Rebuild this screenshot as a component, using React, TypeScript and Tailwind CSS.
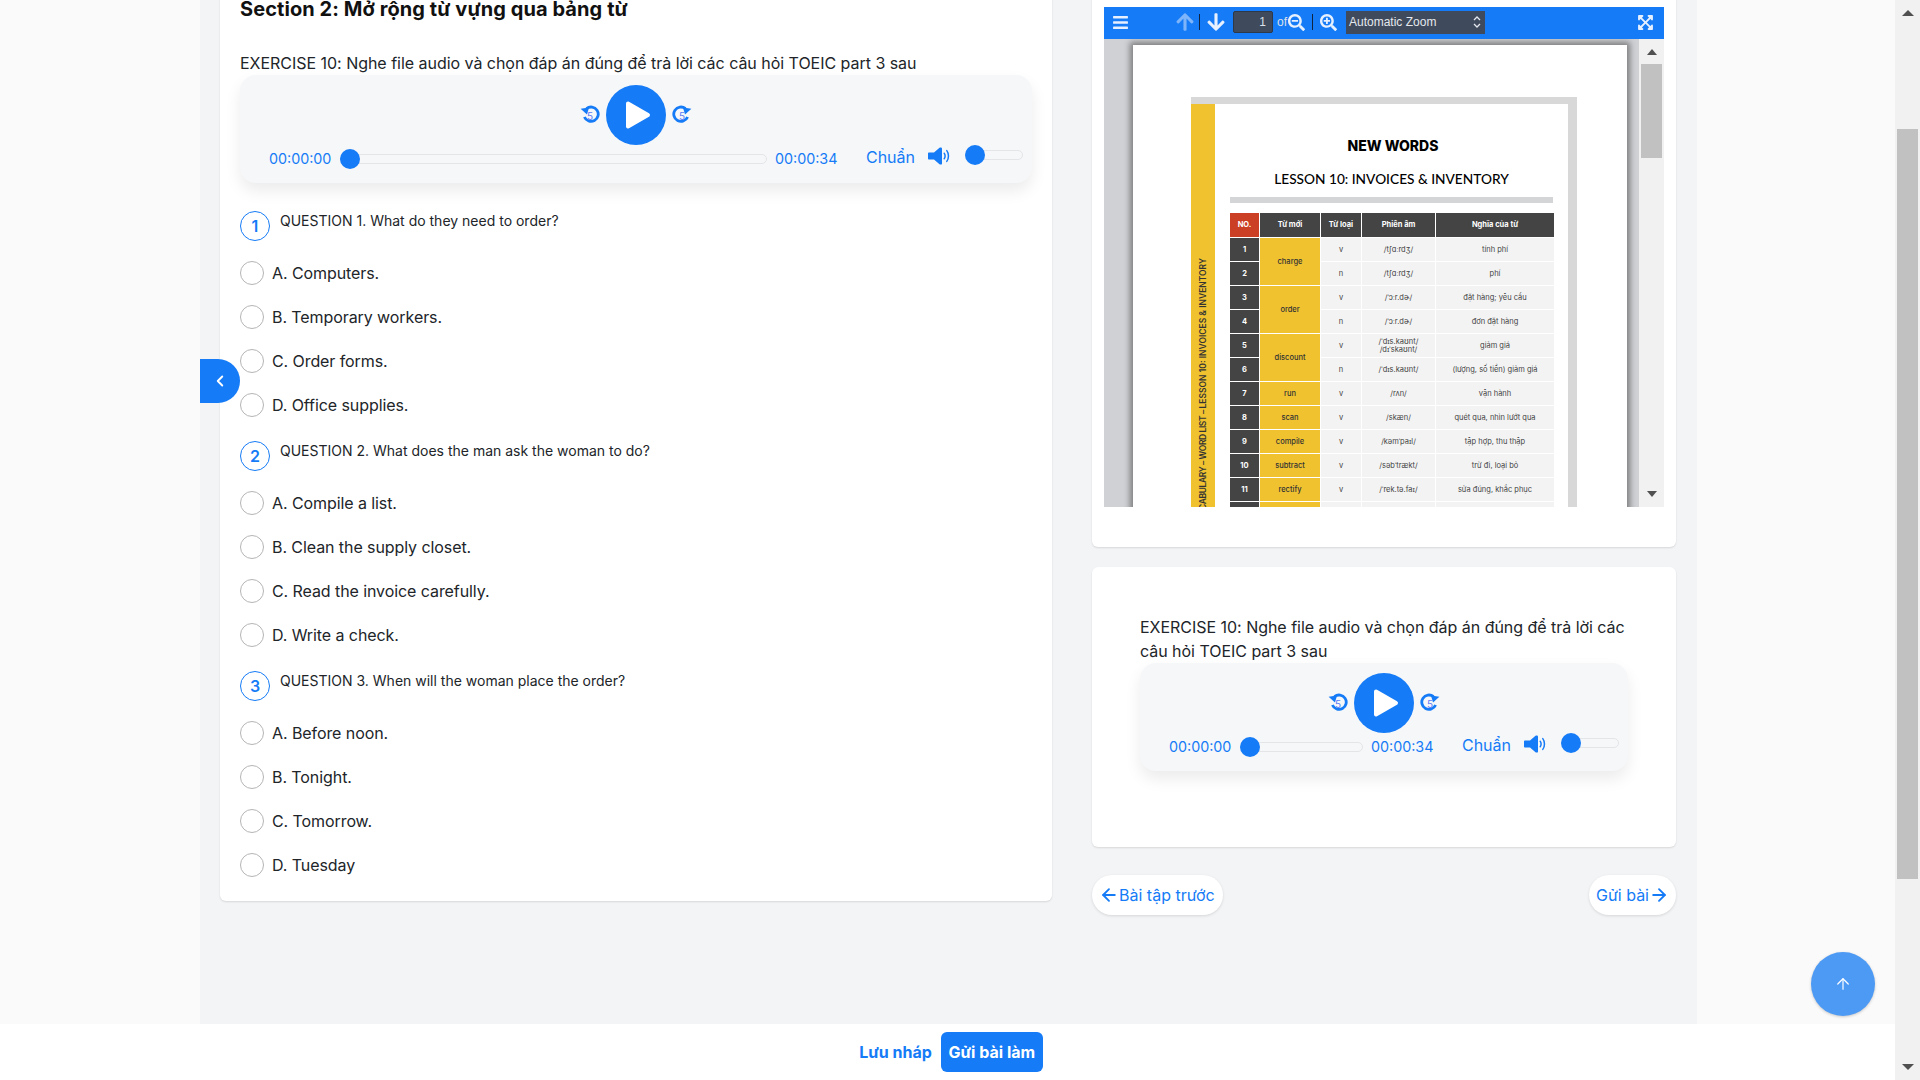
import { ArrowLeft, ArrowRight, ArrowUp, ChevronLeft } from 'lucide-react'
import {
  FaArrowDown,
  FaArrowUp,
  FaBars,
  FaExpandArrowsAlt,
  FaSearchMinus,
  FaSearchPlus,
} from 'react-icons/fa'

const questions = [
  {
    id: 1,
    text: 'QUESTION 1. What do they need to order?',
    options: ['A. Computers.', 'B. Temporary workers.', 'C. Order forms.', 'D. Office supplies.'],
  },
  {
    id: 2,
    text: 'QUESTION 2. What does the man ask the woman to do?',
    options: ['A. Compile a list.', 'B. Clean the supply closet.', 'C. Read the invoice carefully.', 'D. Write a check.'],
  },
  {
    id: 3,
    text: 'QUESTION 3. When will the woman place the order?',
    options: ['A. Before noon.', 'B. Tonight.', 'C. Tomorrow.', 'D. Tuesday'],
  },
]

const words = [
  { no: 1, word: 'charge', span: 2, type: 'v', ipa: '/tʃɑːrdʒ/', mean: 'tính phí' },
  { no: 2, type: 'n', ipa: '/tʃɑːrdʒ/', mean: 'phí' },
  { no: 3, word: 'order', span: 2, type: 'v', ipa: '/ˈɔːr.dɚ/', mean: 'đặt hàng; yêu cầu' },
  { no: 4, type: 'n', ipa: '/ˈɔːr.dɚ/', mean: 'đơn đặt hàng' },
  { no: 5, word: 'discount', span: 2, type: 'v', ipa: '/ˈdɪs.kaʊnt/', ipa2: '/dɪˈskaʊnt/', mean: 'giảm giá' },
  { no: 6, type: 'n', ipa: '/ˈdɪs.kaʊnt/', mean: '(lượng, số tiền) giảm giá' },
  { no: 7, word: 'run', span: 1, type: 'v', ipa: '/rʌn/', mean: 'vận hành' },
  { no: 8, word: 'scan', span: 1, type: 'v', ipa: '/skæn/', mean: 'quét qua, nhìn lướt qua' },
  { no: 9, word: 'compile', span: 1, type: 'v', ipa: '/kəmˈpaɪl/', mean: 'tập hợp, thu thập' },
  { no: 10, word: 'subtract', span: 1, type: 'v', ipa: '/səbˈtrækt/', mean: 'trừ đi, loại bỏ' },
  { no: 11, word: 'rectify', span: 1, type: 'v', ipa: '/ˈrek.tə.faɪ/', mean: 'sửa đúng, khắc phục' },
]

function SkipIcon({ flip }: { flip?: boolean }) {
  return (
    <div className="relative h-[20px] w-[20px] shrink-0">
      <svg viewBox="0 0 20 20" className={flip ? '-scale-x-100 h-[20px] w-[20px]' : 'h-[20px] w-[20px]'}>
        <path d="M6.5 3.6A7.2 7.2 0 1 1 4.4 12" fill="none" stroke="#157bf6" strokeWidth="2.8" />
        <path d="M0.6 3.8 9 2.4 7 9.4Z" fill="#157bf6" />
      </svg>
      <span className="absolute inset-0 mt-[2px] flex items-center justify-center text-[10px] text-[#5b7cf5]">5</span>
    </div>
  )
}

function Speaker() {
  return (
    <svg viewBox="0 0 22 18" className="ml-[14px] mb-[3px] h-[18px] w-[22px] shrink-0" fill="#157bf6">
      <path d="M0 6.5C0 5.8.5 5.5 1 5.5H6L11.5.8C12.5 0 14 .4 14 1.6V16.4C14 17.6 12.5 18 11.5 17.2L6 12.5H1C.5 12.5 0 12.2 0 11.5Z" />
      <path d="M16.2 6.2C17.4 7.6 17.4 10.4 16.2 11.8" fill="none" stroke="#157bf6" strokeWidth="1.5" strokeLinecap="round" />
      <path d="M18.8 3.6C21 6.4 21 11.6 18.8 14.4" fill="none" stroke="#157bf6" strokeWidth="1.5" strokeLinecap="round" />
    </svg>
  )
}

function Player() {
  return (
    <div className="rounded-2xl bg-[#f6f7f9] pt-[10px] pb-[10px] pl-[29px] pr-[9px] shadow-[0_8px_16px_rgba(0,0,0,0.08)]">
      <div className="ml-[-20px] flex items-center justify-center gap-[6px]">
        <SkipIcon />
        <div className="flex h-[60px] w-[60px] items-center justify-center rounded-full bg-[#157bf6]">
          <svg viewBox="0 0 26 30" className="ml-[3px] h-[30px] w-[26px]">
            <path d="M3 3.5 23 15 3 26.5Z" fill="#fff" stroke="#fff" strokeWidth="4" strokeLinejoin="round" />
          </svg>
        </div>
        <SkipIcon flip />
      </div>
      <div className="flex h-[28px] items-center text-[#157bf6]">
        <span className="-mt-[1px] w-[63px] shrink-0 text-[14.3px]">00:00:00</span>
        <div className="mx-[8px] flex h-[10px] flex-1 items-center rounded-full border border-[#e3e5e9]">
          <div className="-ml-[1px] h-[20px] w-[20px] rounded-full bg-[#157bf6]" />
        </div>
        <span className="-mt-[1px] w-[62px] shrink-0 text-[14.3px]">00:00:34</span>
        <div className="ml-[29px] flex h-[24px] shrink-0 items-center self-start">
          <span className="w-[48px] text-[16px] tracking-[-0.05px]">Chuẩn</span>
          <Speaker />
          <div className="ml-[15px] mb-[4px] flex h-[10px] w-[58px] items-center rounded-full border border-[#e3e5e9]">
            <div className="-ml-[1px] h-[20px] w-[20px] rounded-full bg-[#157bf6]" />
          </div>
        </div>
      </div>
    </div>
  )
}

function Question({ q }: { q: (typeof questions)[number] }) {
  return (
    <div className="mb-[24px]">
      <div className="flex h-[30px] gap-[10px]">
        <div className="flex h-[30px] w-[30px] items-center justify-center rounded-full border border-[#157bf6] text-[16px] font-semibold text-[#157bf6]">
          {q.id}
        </div>
        <span className="text-[14px] leading-[20px] text-[#212529]">{q.text}</span>
      </div>
      <div className="mt-[20px] flex flex-col gap-[20px]">
        {q.options.map((o) => (
          <div key={o} className="flex h-[24px] items-center gap-[8px]">
            <div className="h-[24px] w-[24px] rounded-full border border-[#b5b5b5] bg-white" />
            <span className="text-[16px] tracking-[-0.08px] text-[#212529]">{o}</span>
          </div>
        ))}
      </div>
    </div>
  )
}

function PdfViewer() {
  return (
    <div>
      <div className="flex h-[32px] items-center bg-[#157bf6] pb-[2px] pl-[8px] pr-[10px] text-[#e6f0ff]">
        <FaBars className="text-[17px]" />
        <FaArrowUp className="ml-[46px] text-[20px] opacity-50" />
        <div className="ml-[4px] h-[16px] w-[1px] bg-[#10243f]" />
        <FaArrowDown className="ml-[6px] text-[20px]" />
        <div className="ml-[7px] flex h-[22px] w-[40px] items-center justify-end rounded-[2px] border border-[#2d3848] bg-[#3f4a5c] pr-[6px] text-[12px] text-[#d9e0ea] font-['Liberation_Sans',sans-serif]">
          1
        </div>
        <span className="ml-[4px] text-[12px] text-[#d9e0ea] font-['Liberation_Sans',sans-serif]">of</span>
        <FaSearchMinus className="ml-[1px] text-[17px]" />
        <div className="ml-[7px] h-[16px] w-[1px] bg-[#10243f]" />
        <FaSearchPlus className="ml-[7px] text-[17px]" />
        <div className="ml-[9px] flex h-[23px] w-[139px] items-center justify-between bg-[#3f4a5c] pl-[3px] pr-[4px] text-[12px] text-[#e4e8ee] font-['Liberation_Sans',sans-serif]">
          <span>Automatic Zoom</span>
          <svg viewBox="0 0 8 14" className="h-[14px] w-[8px]">
            <path d="M1 5 4 2 7 5M1 9 4 12 7 9" fill="none" stroke="#e4e8ee" strokeWidth="1.3" />
          </svg>
        </div>
        <FaExpandArrowsAlt className="ml-auto text-[17px]" />
      </div>
      <div className="flex h-[468px] overflow-hidden bg-[#d0d1d4]">
        <div className="ml-[29px] mt-[6px] h-[700px] w-[494px] shrink-0 bg-white pl-[58px] pt-[52px] shadow-[0_0_6px_3px_rgba(0,0,0,0.4)]">
          <div className="h-[640px] w-[386px] bg-[#d8d8d8] pt-[7px] pr-[9px]">
            <div className="flex h-[620px] bg-white">
              <div className="flex h-full w-[24px] shrink-0 justify-center bg-[#f0c230]">
                <span className="mt-[154px] h-fit self-start rotate-180 whitespace-nowrap text-[8.5px] font-semibold text-[#333] [writing-mode:vertical-rl]">
                  <span className="tracking-[-0.4px]">VOCABULARY – WORD LIST – </span>LESSON 10: INVOICES &amp; INVENTORY
                </span>
              </div>
              <div className="flex-1 pl-[15px]">
                <div className="mt-[32px] pr-[12px] text-center text-[14px] font-extrabold leading-[20px] text-black">
                  NEW WORDS
                </div>
                <div className="mt-[13px] pr-[15px] text-center text-[13.7px] font-medium leading-[20px] text-black font-['Lato',sans-serif]">
                  LESSON 10: INVOICES &amp; INVENTORY
                </div>
                <div className="mt-[8px] h-[6px] w-[323px] bg-[#d4d5d7]" />
                <table className="mt-[9px] -ml-[1px] w-[326px] table-fixed border-separate border-spacing-[1px] text-center text-[7.5px] leading-[8px] text-[#444]">
                  <colgroup>
                    <col className="w-[29px]" />
                    <col className="w-[60px]" />
                    <col className="w-[40px]" />
                    <col className="w-[73px]" />
                    <col />
                  </colgroup>
                  <thead>
                    <tr className="h-[24px] bg-[#444] font-bold text-white">
                      <th className="bg-[#cb3f24]">NO.</th>
                      <th>Từ mới</th>
                      <th>Từ loại</th>
                      <th>Phiên âm</th>
                      <th>Nghĩa của từ</th>
                    </tr>
                  </thead>
                  <tbody>
                    {words.map((w) => (
                      <tr key={w.no} className="h-[23px]">
                        <td className="bg-[#444] font-bold text-white">{w.no}</td>
                        {w.word && (
                          <td rowSpan={w.span} className="bg-[#f0c230] font-medium text-[#333]">
                            {w.word}
                          </td>
                        )}
                        <td className="bg-[#f3f3f3]">{w.type}</td>
                        <td className="bg-[#f3f3f3]">
                          {w.ipa}
                          {w.ipa2 && <br />}
                          {w.ipa2}
                        </td>
                        <td className="bg-[#f3f3f3]">{w.mean}</td>
                      </tr>
                    ))}
                    <tr className="h-[23px]">
                      <td className="bg-[#444]" />
                      <td className="bg-[#f0c230]" />
                      <td className="bg-[#f3f3f3]" />
                      <td className="bg-[#f3f3f3]" />
                      <td className="bg-[#f3f3f3]" />
                    </tr>
                  </tbody>
                </table>
              </div>
            </div>
          </div>
        </div>
        <div className="ml-[12px] flex w-[25px] shrink-0 flex-col items-center bg-[#f1f1f1]">
          <div className="mt-[10px] h-0 w-0 border-x-[5px] border-b-[6px] border-x-transparent border-b-[#505050]" />
          <div className="mt-[9px] h-[94px] w-[21px] bg-[#c1c1c1]" />
          <div className="mt-auto mb-[10px] h-0 w-0 border-x-[5px] border-t-[6px] border-x-transparent border-t-[#505050]" />
        </div>
      </div>
    </div>
  )
}

export default function App() {
  return (
    <div className="flex h-screen w-full overflow-hidden bg-[#fafafa] font-['Inter','Noto_Sans',sans-serif] text-[#212529]">
      <div className="relative flex min-w-0 flex-1 flex-col">
        <div className="flex min-h-0 flex-1">
          <div className="w-[200px] shrink-0" />
          <div className="w-[1497px] shrink-0 bg-[#f3f4f6] pl-[20px]">
            <div className="-mt-[40px] flex items-start gap-[40px]">
              <div className="w-[832px] shrink-0 rounded-md bg-white px-[20px] pt-[35px] shadow-[0_1px_2px_rgba(0,0,0,0.12)]">
                <h2 className="text-[20px] font-bold leading-[28px] tracking-[0.08px] text-[#111]">
                  Section 2: Mở rộng từ vựng qua bảng từ
                </h2>
                <p className="mt-[28px] text-[16px] leading-[24px] tracking-[-0.03px] text-[#212529]">
                  EXERCISE 10: Nghe file audio và chọn đáp án đúng để trả lời các câu hỏi TOEIC part 3 sau
                </p>
                <Player />
                <div className="mt-[28px]">
                  {questions.map((q) => (
                    <Question key={q.id} q={q} />
                  ))}
                </div>
              </div>
              <div className="w-[584px] shrink-0">
                <div className="rounded-md bg-white pl-[12px] pr-[12px] pt-[47px] pb-[40px] shadow-[0_1px_2px_rgba(0,0,0,0.12)]">
                  <PdfViewer />
                </div>
                <div className="mt-[20px] h-[280px] rounded-md bg-white px-[48px] pt-[48px] shadow-[0_1px_2px_rgba(0,0,0,0.12)]">
                  <p className="text-[16px] leading-[24px] tracking-[-0.03px] text-[#212529]">
                    EXERCISE 10: Nghe file audio và chọn đáp án đúng để trả lời các câu hỏi TOEIC part 3 sau
                  </p>
                  <Player />
                </div>
                <div className="mt-[28px] flex justify-between">
                  <button className="flex h-[40px] items-center rounded-full bg-white pl-[7px] pr-[8px] text-[16px] text-[#157bf6] shadow-[0_1px_3px_rgba(0,0,0,0.12)]">
                    <ArrowLeft className="h-[20px] w-[20px]" strokeWidth={2.2} />
                    Bài tập trước
                  </button>
                  <button className="flex h-[40px] items-center rounded-full bg-white pl-[7px] pr-[7px] text-[16px] text-[#157bf6] shadow-[0_1px_3px_rgba(0,0,0,0.12)]">
                    Gửi bài
                    <ArrowRight className="h-[20px] w-[20px]" strokeWidth={2.2} />
                  </button>
                </div>
              </div>
            </div>
          </div>
        </div>
        <div className="flex h-[56px] shrink-0 items-center justify-center gap-[9px] bg-white pl-[7px]">
          <button className="text-[16px] font-bold text-[#157bf6]">Lưu nháp</button>
          <button className="h-[40px] w-[102px] rounded-md bg-[#157bf6] text-[16px] font-bold text-white">Gửi bài làm</button>
        </div>
        <button className="absolute left-[200px] top-[359px] flex h-[44px] w-[40px] items-center justify-center rounded-r-full bg-[#157bf6] text-white">
          <ChevronLeft className="h-[18px] w-[18px]" strokeWidth={2.5} />
        </button>
        <button className="absolute left-[1811px] top-[952px] flex h-[64px] w-[64px] items-center justify-center rounded-full bg-[#4d9af5] text-white shadow-[0_1px_3px_rgba(0,0,0,0.2)]">
          <ArrowUp className="h-[18px] w-[18px]" strokeWidth={1.6} />
        </button>
      </div>
      <div className="flex w-[25px] shrink-0 flex-col items-center bg-[#f1f1f1]">
        <div className="mt-[10px] h-0 w-0 border-x-[6px] border-b-[6px] border-x-transparent border-b-[#505050]" />
        <div className="mt-[113px] h-[750px] w-[21px] bg-[#c1c1c1]" />
        <div className="mt-auto mb-[10px] h-0 w-0 border-x-[6px] border-t-[6px] border-x-transparent border-t-[#505050]" />
      </div>
    </div>
  )
}
